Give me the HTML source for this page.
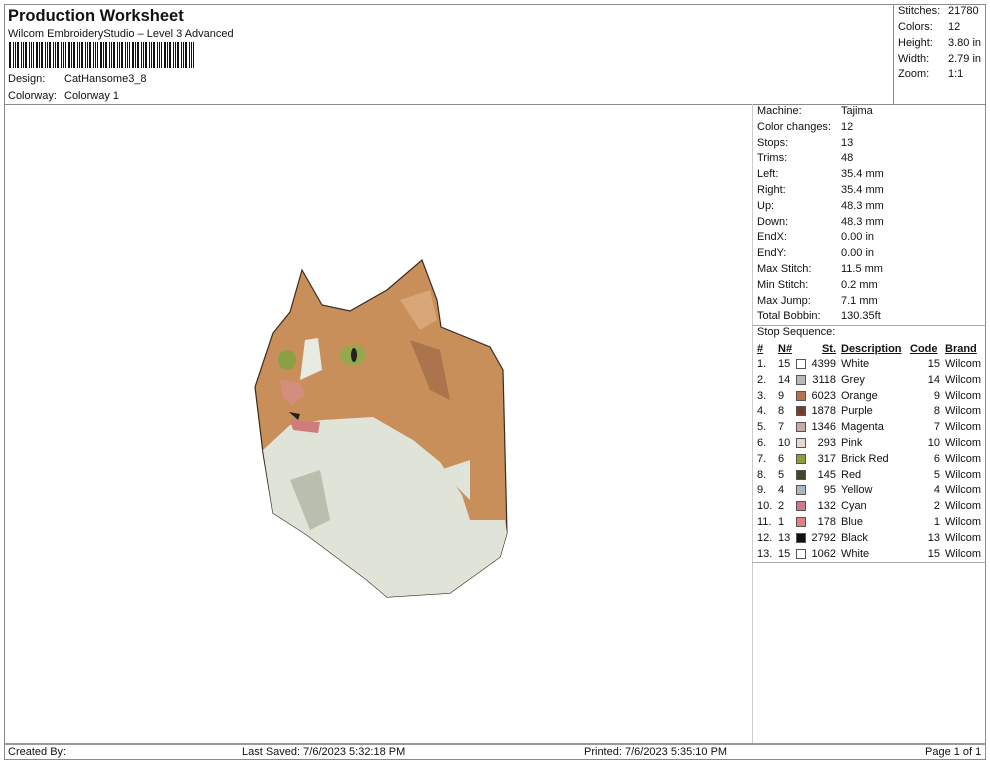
<!DOCTYPE html>
<html><head><meta charset="utf-8"><style>
*{margin:0;padding:0;box-sizing:border-box}
body{width:990px;height:762px;background:#fff;font-family:"Liberation Sans",Arial,sans-serif;font-size:11px;color:#111;position:relative;overflow:hidden}
.a{position:absolute;white-space:nowrap;line-height:13px}
.l{position:absolute;background:#8a8a8a}
.r{text-align:right}
.sw{position:absolute;width:10px;height:10px;border:1px solid #555}
u{text-decoration:underline}
</style></head><body>
<!-- frame -->
<div class="l" style="left:4px;top:4px;width:982px;height:1px"></div>
<div class="l" style="left:4px;top:4px;width:1px;height:756px"></div>
<div class="l" style="left:985px;top:4px;width:1px;height:756px"></div>
<div class="l" style="left:4px;top:759px;width:982px;height:1px"></div>
<div class="l" style="left:4px;top:104px;width:982px;height:1px"></div>
<div class="l" style="left:893px;top:4px;width:1px;height:100px"></div>
<div class="l" style="left:752px;top:104px;width:1px;height:640px;background:#ccc"></div>
<div class="l" style="left:4px;top:743px;width:982px;height:2px;background:#999"></div>
<div class="l" style="left:752px;top:325px;width:234px;height:1px;background:#aaa"></div>
<div class="l" style="left:752px;top:562px;width:234px;height:1px;background:#aaa"></div>

<div class="a" style="left:8px;top:6px;font-size:16.5px;font-weight:bold;line-height:20px">Production Worksheet</div>
<div class="a" style="left:8px;top:28px">Wilcom EmbroideryStudio – Level 3 Advanced</div>
<svg style="position:absolute;left:9px;top:42px" width="187" height="26" id="bc"></svg>
<div class="a" style="left:8px;top:73px">Design:</div><div class="a" style="left:64px;top:73px">CatHansome3_8</div>
<div class="a" style="left:8px;top:90px">Colorway:</div><div class="a" style="left:64px;top:90px">Colorway 1</div>

<div class="a" style="left:898px;top:5px">Stitches:</div><div class="a" style="left:948px;top:5px">21780</div>
<div class="a" style="left:898px;top:21px">Colors:</div><div class="a" style="left:948px;top:21px">12</div>
<div class="a" style="left:898px;top:37px">Height:</div><div class="a" style="left:948px;top:37px">3.80 in</div>
<div class="a" style="left:898px;top:53px">Width:</div><div class="a" style="left:948px;top:53px">2.79 in</div>
<div class="a" style="left:898px;top:68px">Zoom:</div><div class="a" style="left:948px;top:68px">1:1</div>

<div id="stats"></div>
<div class="a" style="left:757px;top:326px">Stop Sequence:</div>
<div class="a" style="left:757px;top:343px;font-weight:bold"><u>#</u></div>
<div class="a" style="left:778px;top:343px;font-weight:bold"><u>N#</u></div>
<div class="a r" style="left:800px;width:36px;top:343px;font-weight:bold"><u>St.</u></div>
<div class="a" style="left:841px;top:343px;font-weight:bold"><u>Description</u></div>
<div class="a" style="left:910px;top:343px;font-weight:bold"><u>Code</u></div>
<div class="a" style="left:945px;top:343px;font-weight:bold"><u>Brand</u></div>
<div id="tbl"></div>

<svg style="position:absolute;left:0;top:0" width="990" height="762">
<path d="M290,312 L302,270 L322,305 L350,311 L387,290 L422,260 L437,300 L441,327 L490,347 L503,370 L507,533 L500,557 L450,593 L387,597 L367,580 L307,535 L273,513 L263,453 L255,387 L273,333 Z" fill="#c98f5a" stroke="#3a2a20" stroke-width="1.2"/>
<path d="M263,450 L290,425 L322,420 L373,417 L413,440 L440,462 L462,495 L470,520 L505,520 L507,533 L500,557 L450,593 L387,597 L367,580 L307,535 L273,513 Z" fill="#dfe3d8"/>
<path d="M290,480 L320,470 L330,520 L310,530 Z" fill="#b9bfae"/>
<path d="M440,470 L470,460 L470,500 Z" fill="#dfe3d8"/>
<path d="M305,340 L318,338 L322,370 L300,380 Z" fill="#e8ebe2"/>
<path d="M400,300 L430,290 L437,320 L420,330 Z" fill="#d9a677"/>
<path d="M410,340 L440,350 L450,400 L430,390 Z" fill="#8e5a40" opacity=".5"/>
<ellipse cx="287" cy="360" rx="9" ry="10" fill="#8aa043"/>
<ellipse cx="353" cy="355" rx="13" ry="10" fill="#93a94b"/>
<ellipse cx="354" cy="355" rx="3" ry="7" fill="#222"/>
<path d="M280,380 L300,383 L305,395 L292,405 L283,398 Z" fill="#d38e80"/>
<path d="M290,420 L320,422 L318,433 L293,430 Z" fill="#d07c7c"/>
<path d="M289,412 L300,414 L298,420 Z" fill="#2a2020"/>
</svg>

<div class="a" style="left:8px;top:746px">Created By:</div>
<div class="a" style="left:242px;top:746px">Last Saved: 7/6/2023 5:32:18 PM</div>
<div class="a" style="left:584px;top:746px">Printed: 7/6/2023 5:35:10 PM</div>
<div class="a" style="left:925px;top:746px">Page 1 of 1</div>

<script>
var s=[["Machine:","Tajima"],["Color changes:","12"],["Stops:","13"],["Trims:","48"],["Left:","35.4 mm"],["Right:","35.4 mm"],["Up:","48.3 mm"],["Down:","48.3 mm"],["EndX:","0.00 in"],["EndY:","0.00 in"],["Max Stitch:","11.5 mm"],["Min Stitch:","0.2 mm"],["Max Jump:","7.1 mm"],["Total Bobbin:","130.35ft"]];
var h="";s.forEach(function(r,i){var y=105+i*15.8;h+='<div class="a" style="left:757px;top:'+y+'px">'+r[0]+'</div><div class="a" style="left:841px;top:'+y+'px">'+r[1]+'</div>';});
document.getElementById("stats").innerHTML=h;
var t=[["15","4399","White","15","#fff"],["14","3118","Grey","14","#b8b8b8"],["9","6023","Orange","9","#b8724a"],["8","1878","Purple","8","#7a3a30"],["7","1346","Magenta","7","#c4aca0"],["10","293","Pink","10","#ead8cc"],["6","317","Brick Red","6","#8aa040"],["5","145","Red","5","#3e4a2a"],["4","95","Yellow","4","#a8b8c4"],["2","132","Cyan","2","#d07888"],["1","178","Blue","1","#e0807a"],["13","2792","Black","13","#111"],["15","1062","White","15","#fff"]];
h="";t.forEach(function(r,i){var y=358+i*15.8;
h+='<div class="a" style="left:757px;top:'+y+'px">'+(i+1)+'.</div>'+
'<div class="a" style="left:778px;top:'+y+'px">'+r[0]+'</div>'+
'<div class="sw" style="left:796px;top:'+(y+1)+'px;background:'+r[4]+'"></div>'+
'<div class="a r" style="left:800px;width:36px;top:'+y+'px">'+r[1]+'</div>'+
'<div class="a" style="left:841px;top:'+y+'px">'+r[2]+'</div>'+
'<div class="a r" style="left:910px;width:30px;top:'+y+'px">'+r[3]+'</div>'+
'<div class="a" style="left:945px;top:'+y+'px">Wilcom</div>';});
document.getElementById("tbl").innerHTML=h;
var b="",x=0,w=[2,1,1,2,1,1,2,1,1,1,2,1],k=0;
while(x<186){var bw=w[k%w.length];b+='<rect x="'+x+'" y="0" width="'+bw+'" height="26" fill="#111"/>';x+=bw+ (k%3==0?2:1);k++;}
document.getElementById("bc").innerHTML=b;
</script>
</body></html>
